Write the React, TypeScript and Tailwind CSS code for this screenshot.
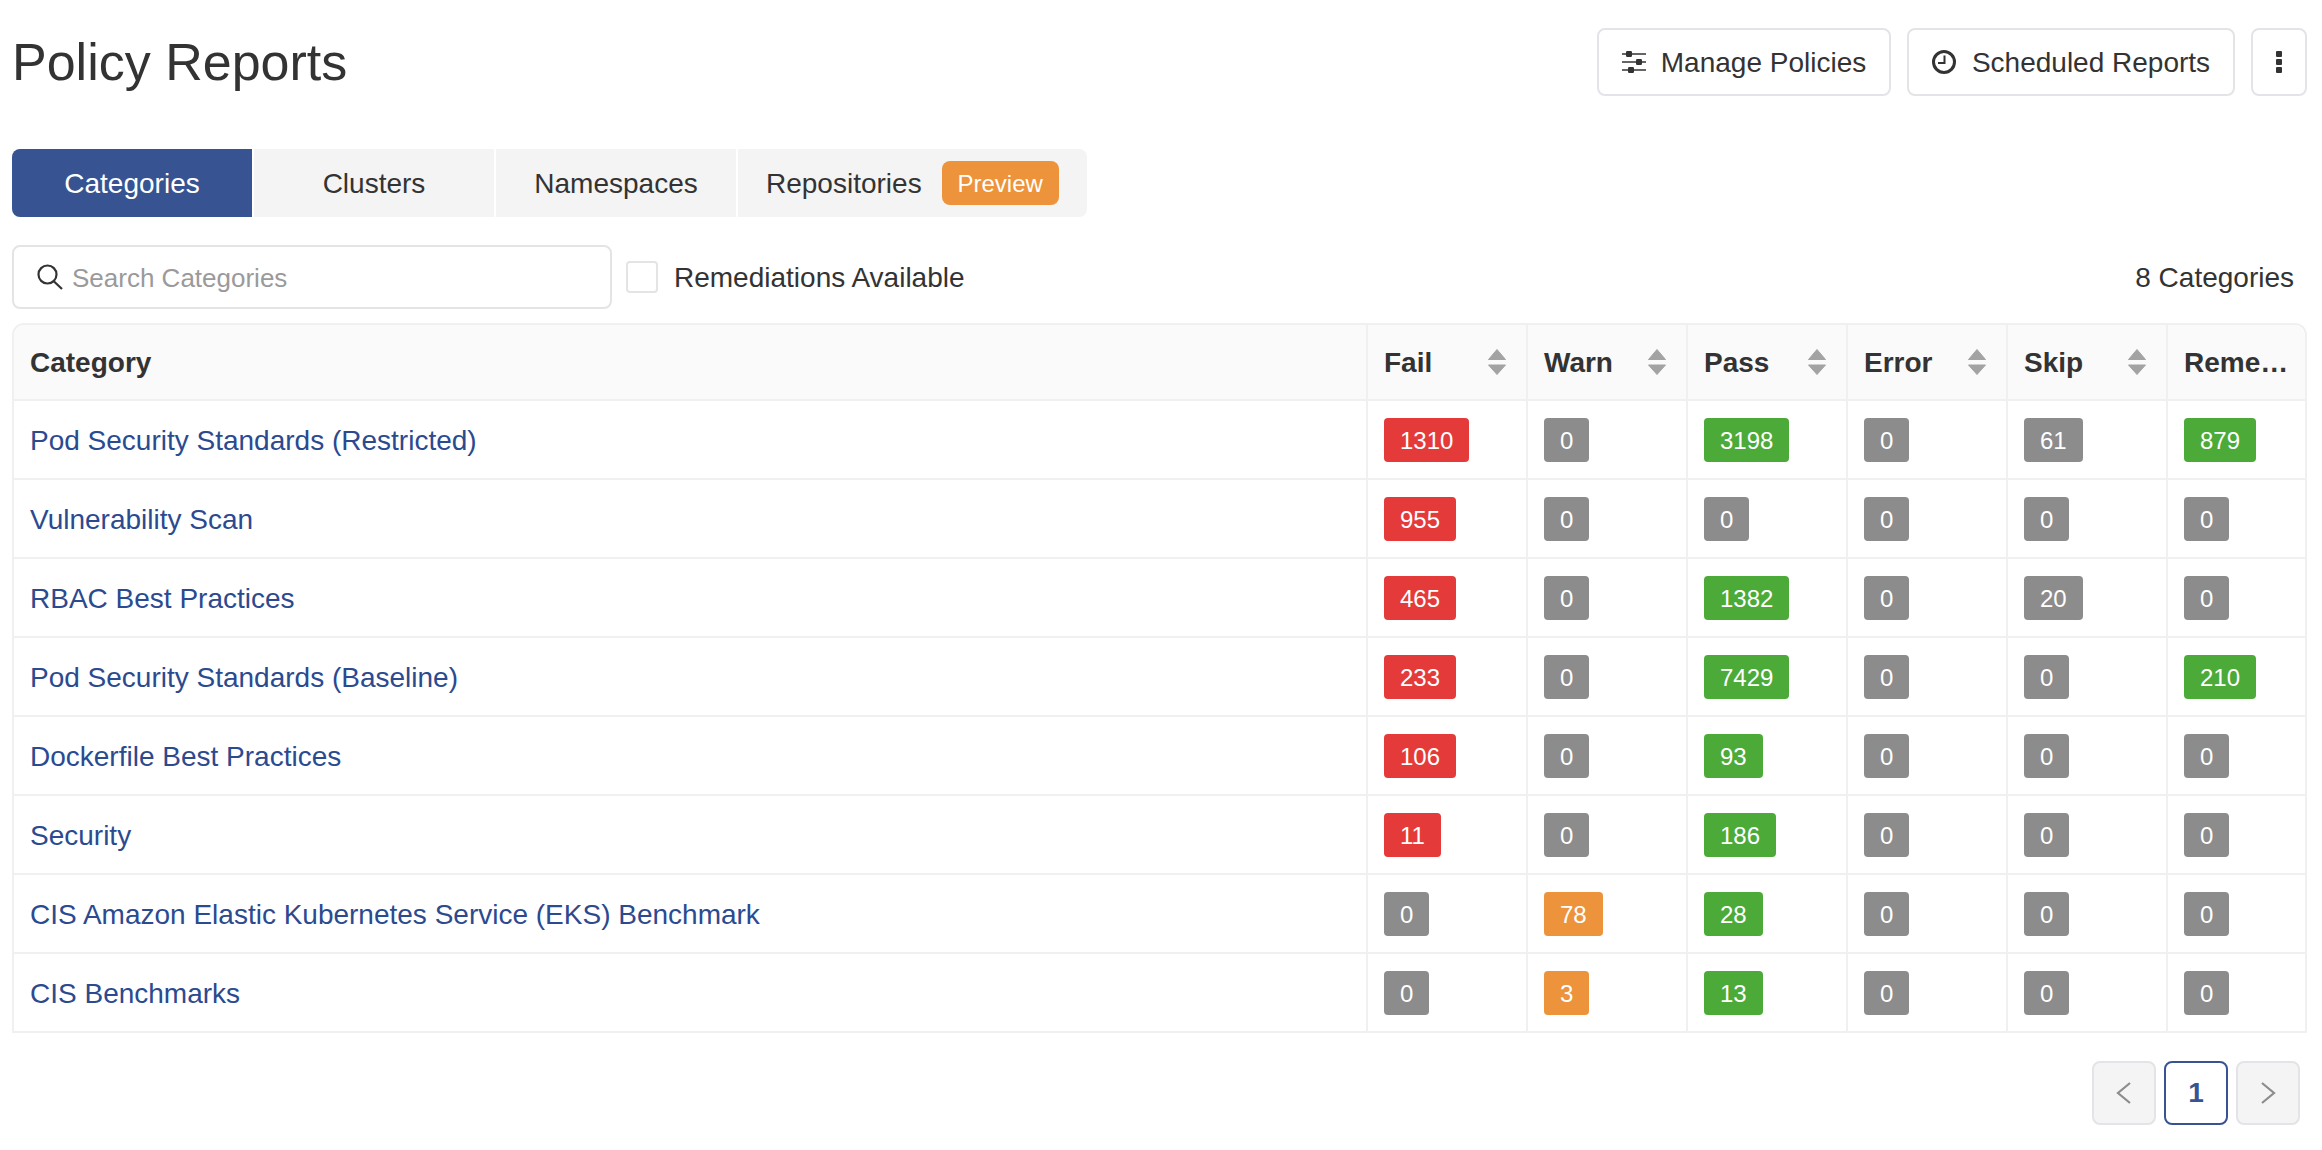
import React from "react";

type Tone = "red" | "gray" | "green" | "orange";
const toneClass: Record<Tone, string> = {
  red: "bg-[#e53a3a]",
  gray: "bg-[#8c8c8c]",
  green: "bg-[#4caa38]",
  orange: "bg-[#ec933c]",
};

function Badge({ n, tone }: { n: number; tone?: Tone }) {
  const t: Tone = tone ?? "gray";
  return (
    <span className={`inline-flex h-[44px] items-center rounded-[4px] px-[16px] pt-[2px] text-[24px] leading-none text-white align-middle ${toneClass[t]}`}>
      {n}
    </span>
  );
}

type Row = { name: string; vals: number[] };
const rows: Row[] = [
  { name: "Pod Security Standards (Restricted)", vals: [1310, 0, 3198, 0, 61, 879] },
  { name: "Vulnerability Scan", vals: [955, 0, 0, 0, 0, 0] },
  { name: "RBAC Best Practices", vals: [465, 0, 1382, 0, 20, 0] },
  { name: "Pod Security Standards (Baseline)", vals: [233, 0, 7429, 0, 0, 210] },
  { name: "Dockerfile Best Practices", vals: [106, 0, 93, 0, 0, 0] },
  { name: "Security", vals: [11, 0, 186, 0, 0, 0] },
  { name: "CIS Amazon Elastic Kubernetes Service (EKS) Benchmark", vals: [0, 78, 28, 0, 0, 0] },
  { name: "CIS Benchmarks", vals: [0, 3, 13, 0, 0, 0] },
];

const tones: Tone[] = ["red", "orange", "green", "gray", "gray", "green"];
const headers = ["Fail", "Warn", "Pass", "Error", "Skip"];

function SortIcon() {
  return (
    <svg width="18" height="26" viewBox="0 0 18 26" className="shrink-0">
      <path d="M9 0.5 L17.5 10.5 H0.5 Z" fill="#a3a3a3" stroke="#a3a3a3" strokeWidth="1" strokeLinejoin="round" />
      <path d="M9 25.5 L0.5 16 H17.5 Z" fill="#a3a3a3" stroke="#a3a3a3" strokeWidth="1" strokeLinejoin="round" />
    </svg>
  );
}

function SlidersIcon() {
  return (
    <svg width="24" height="24" viewBox="0 0 24 24" fill="none" stroke="#333333" strokeWidth="1.6">
      <path d="M0 4 H24 M0 12 H24 M0 20 H24" />
      <rect x="4" y="1" width="6" height="6" rx="1.2" fill="#333333" stroke="none" />
      <rect x="14" y="9" width="6" height="6" rx="1.2" fill="#333333" stroke="none" />
      <rect x="6" y="17" width="6" height="6" rx="1.2" fill="#333333" stroke="none" />
    </svg>
  );
}

function ClockIcon() {
  return (
    <svg width="24" height="24" viewBox="0 0 24 24" fill="none" stroke="#333333" strokeWidth="3">
      <circle cx="12" cy="12" r="10.5" />
      <path d="M12.5 5.5 V13 H6" strokeWidth="2" />
    </svg>
  );
}

function Tab({ label, active, w }: { label: string; active?: boolean; w: string }) {
  return (
    <div className={`flex h-full items-center justify-center pt-[2px] ${w} ${active ? "bg-[#375391] text-white" : "bg-[#f4f4f4] text-[#333333]"}`}>
      <span>{label}</span>
    </div>
  );
}

export default function App() {
  return (
    <div className="h-[1150px] w-[2322px] overflow-hidden bg-white pl-[12px] pr-[15px] text-[28px] text-[#333333] [font-family:'Liberation_Sans',Arial,sans-serif]">
      <div className="flex h-[149px] items-start justify-between pt-[28px]">
        <h1 className="text-[52px] leading-[68px] font-normal">Policy Reports</h1>
        <div className="flex gap-[16px]">
          <button className="flex h-[68px] w-[294px] items-center justify-center gap-[15px] rounded-[8px] border-2 border-[#e4e4e8] bg-white">
            <SlidersIcon />
            <span className="pt-[2px]">Manage Policies</span>
          </button>
          <button className="flex h-[68px] w-[328px] items-center justify-center gap-[16px] rounded-[8px] border-2 border-[#e4e4e8] bg-white">
            <ClockIcon />
            <span className="pt-[2px]">Scheduled Reports</span>
          </button>
          <button className="flex h-[68px] w-[56px] items-center justify-center rounded-[8px] border-2 border-[#e4e4e8] bg-white">
            <span className="flex flex-col gap-[2px]">
              <span className="h-[6px] w-[6px] rounded-[1px] bg-[#333333]" />
              <span className="h-[6px] w-[6px] rounded-[1px] bg-[#333333]" />
              <span className="h-[6px] w-[6px] rounded-[1px] bg-[#333333]" />
            </span>
          </button>
        </div>
      </div>

      <div className="flex h-[68px] w-[1075px] gap-[2px] overflow-hidden rounded-[8px]">
        <Tab label="Categories" active w="w-[240px]" />
        <Tab label="Clusters" w="w-[240px]" />
        <Tab label="Namespaces" w="w-[240px]" />
        <div className="flex h-full flex-1 items-center bg-[#f4f4f4] pl-[28px]">
          <span className="pt-[2px]">Repositories</span>
          <span className="ml-[20px] flex h-[44px] w-[117px] items-center justify-center rounded-[8px] bg-[#ec933c] pt-[2px] text-[24px] text-white">Preview</span>
        </div>
      </div>

      <div className="mt-[28px] flex h-[64px] items-center justify-between">
        <div className="flex items-center">
          <div className="flex h-[64px] w-[600px] items-center rounded-[8px] border-2 border-[#e4e4e4] bg-white pl-[23px]">
            <svg width="26" height="26" viewBox="0 0 26 26" fill="none" stroke="#333333" strokeWidth="2.2">
              <circle cx="10.5" cy="10.5" r="9" />
              <path d="M16.5 17 L25 25" />
            </svg>
            <span className="ml-[9px] pt-[2px] text-[26px] text-[#9a9a9a]">Search Categories</span>
          </div>
          <span className="ml-[14px] h-[32px] w-[32px] rounded-[4px] border-2 border-[#e4e4e4]" />
          <span className="ml-[16px] pt-[2px]">Remediations Available</span>
        </div>
        <span className="mr-[13px] pt-[2px]">8 Categories</span>
      </div>

      <table className="mt-[14px] w-[2295px] table-fixed border-separate border-spacing-0 rounded-t-[12px] border-t-2 border-l-2 border-r-2 border-[#f0f0f0]">
        <colgroup>
          <col className="w-[1352px]" />
          <col className="w-[160px]" />
          <col className="w-[160px]" />
          <col className="w-[160px]" />
          <col className="w-[160px]" />
          <col className="w-[160px]" />
          <col />
        </colgroup>
        <thead>
          <tr className="h-[76px]">
            <th className="rounded-tl-[12px] border-b-2 border-[#f0f0f0] bg-[#fafafa] px-[16px] pt-[2px] text-left font-bold">Category</th>
            {headers.map((h) => (
              <th key={h} className="border-b-2 border-l-2 border-[#f0f0f0] bg-[#fafafa] pr-[20px] pl-[16px] text-left font-bold">
                <div className="flex items-center justify-between">
                  <span className="pt-[2px]">{h}</span>
                  <SortIcon />
                </div>
              </th>
            ))}
            <th className="rounded-tr-[12px] border-b-2 border-l-2 border-[#f0f0f0] bg-[#fafafa] pt-[2px] pl-[16px] text-left font-bold">Reme…</th>
          </tr>
        </thead>
        <tbody>
          {rows.map((r) => (
            <tr key={r.name} className="h-[79px]">
              <td className="border-b-2 border-[#f0f0f0] px-[16px] pt-[2px] text-[#2b4a8f]">{r.name}</td>
              {r.vals.map((v, i) => (
                <td key={i} className="border-b-2 border-l-2 border-[#f0f0f0] px-[16px]">
                  <Badge n={v} tone={v === 0 ? "gray" : tones[i]} />
                </td>
              ))}
            </tr>
          ))}
        </tbody>
      </table>

      <div className="mt-[28px] flex justify-end gap-[8px] pr-[7px]">
        <span className="flex h-[64px] w-[64px] items-center justify-center rounded-[8px] border-2 border-[#e4e4e8] bg-[#f4f4f4]">
          <svg width="16" height="22" viewBox="0 0 16 22" fill="none" stroke="#8c8c8c" strokeWidth="2.2"><path d="M14 1 L2 11 L14 21" /></svg>
        </span>
        <span className="flex h-[64px] w-[64px] items-center justify-center rounded-[8px] border-2 border-[#375391] bg-white font-bold text-[#375391]">1</span>
        <span className="flex h-[64px] w-[64px] items-center justify-center rounded-[8px] border-2 border-[#e4e4e8] bg-[#f4f4f4]">
          <svg width="16" height="22" viewBox="0 0 16 22" fill="none" stroke="#8c8c8c" strokeWidth="2.2"><path d="M2 1 L14 11 L2 21" /></svg>
        </span>
      </div>
    </div>
  );
}
